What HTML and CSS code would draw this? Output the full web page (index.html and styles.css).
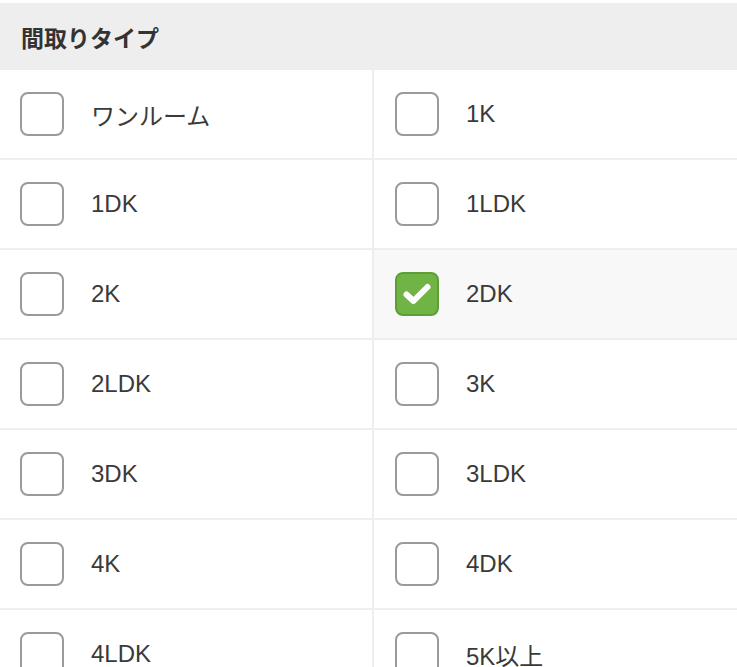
FILE: index.html
```html
<!DOCTYPE html>
<html lang="ja">
<head>
  <meta charset="UTF-8">
  <title>間取りタイプ</title>
  <link rel="stylesheet" href="styles.css">
</head>
<body>

  <div class="panel">
    <div class="panel-title">間取りタイプ</div>
    <div class="options">
      <label class="option"><span class="box"></span><span class="name">ワンルーム</span></label>
      <label class="option"><span class="box"></span><span class="name">1K</span></label>
      <label class="option"><span class="box"></span><span class="name">1DK</span></label>
      <label class="option"><span class="box"></span><span class="name">1LDK</span></label>
      <label class="option"><span class="box"></span><span class="name">2K</span></label>
      <label class="option checked">
        <span class="box">
          <svg viewBox="0 0 44 44" width="44" height="44">
            <path d="M11.5 22.5 L18.5 29 L32.5 15" fill="none" stroke="#fff" stroke-width="6" stroke-linecap="round" stroke-linejoin="round"/>
          </svg>
        </span>
        <span class="name">2DK</span>
      </label>
      <label class="option"><span class="box"></span><span class="name">2LDK</span></label>
      <label class="option"><span class="box"></span><span class="name">3K</span></label>
      <label class="option"><span class="box"></span><span class="name">3DK</span></label>
      <label class="option"><span class="box"></span><span class="name">3LDK</span></label>
      <label class="option"><span class="box"></span><span class="name">4K</span></label>
      <label class="option"><span class="box"></span><span class="name">4DK</span></label>
      <label class="option"><span class="box"></span><span class="name">4LDK</span></label>
      <label class="option"><span class="box"></span><span class="name">5K以上</span></label>
    </div>
  </div>

</body>
</html>
```

FILE: styles.css
```css
body {
  margin: 0;
  padding-top: 3px;
  background: #fff;
  color: #333;
  font-family: 'Liberation Sans', 'Noto Sans CJK JP', sans-serif;
}

.panel-title {
  height: 67px;
  display: flex;
  align-items: center;
  padding-left: 21px;
  background: #eee;
  font-size: 23px;
  font-weight: bold;
  color: #333;
}

.options {
  display: grid;
  grid-template-columns: 374px 1fr;
}

.option {
  display: flex;
  align-items: center;
  height: 88px;
  padding-left: 20px;
  border-bottom: 2px solid #eee;
  cursor: pointer;
}

.option:nth-child(odd) {
  border-right: 2px solid #eee;
}

.option:nth-child(even) {
  padding-left: 21px;
}

.option.checked {
  background: #f8f8f8;
}

.box {
  width: 44px;
  height: 44px;
  box-sizing: border-box;
  border: 2px solid #9a9a9a;
  border-radius: 8px;
  background: #fff;
  flex-shrink: 0;
  position: relative;
}

.checked .box {
  background: #70b445;
  border-color: #5d9e36;
}

.box svg {
  position: absolute;
  left: -2px;
  top: -2px;
}

.name {
  margin-left: 27px;
  font-size: 24px;
  color: #3a3a3a;
}
```
